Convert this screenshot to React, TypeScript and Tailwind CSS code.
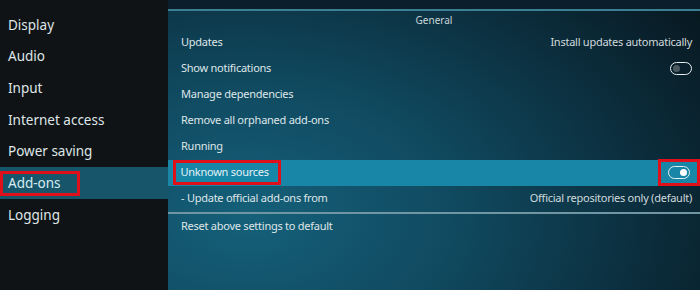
import React from 'react';

const sections = ['Display', 'Audio', 'Input', 'Internet access', 'Power saving', 'Add-ons', 'Logging'];

type Row = {
  label: string;
  value?: string;
  toggle?: 'on' | 'off';
  selected?: boolean;
};

const rows: Row[] = [
  { label: 'Updates', value: 'Install updates automatically' },
  { label: 'Show notifications', toggle: 'off' },
  { label: 'Manage dependencies' },
  { label: 'Remove all orphaned add-ons' },
  { label: 'Running' },
  { label: 'Unknown sources', toggle: 'on', selected: true },
  { label: '- Update official add-ons from', value: 'Official repositories only (default)' },
];

const Toggle: React.FC<{ on: boolean }> = ({ on }) => (
  <div
    className={`w-[22px] h-[13px] rounded-full border-[1.5px] border-[#e8eef0] flex items-center px-[2px] ${
      on ? 'justify-end' : 'justify-start'
    }`}
  >
    <div className={`w-[7px] h-[7px] rounded-full ${on ? 'bg-white' : 'bg-[#4a5a60]'}`} />
  </div>
);

export default function App() {
  return (
    <div
      className="w-[700px] h-[290px] flex overflow-hidden text-[#dfe6e8]"
      style={{ fontFamily: '"Noto Sans", "Open Sans", sans-serif' }}
    >
      {/* category list */}
      <div className="w-[168px] h-full bg-[#0f1316] pt-[9px] flex flex-col">
        {sections.map((s) => {
          const active = s === 'Add-ons';
          return (
            <div
              key={s}
              className={`h-[31.67px] flex items-center text-[13.5px] whitespace-nowrap ${active ? 'bg-[#17566a]' : ''}`}
            >
              {active ? (
                <span className="h-[25px] w-[80px] flex items-center pl-[5px] border-[3.5px] border-[#e0101a] text-[#d9ecf1]">
                  {s}
                </span>
              ) : (
                <span className="pl-[8px]">{s}</span>
              )}
            </div>
          );
        })}
      </div>

      {/* settings panel */}
      <div
        className="flex-1 h-full flex flex-col"
        style={{
          background:
            'radial-gradient(ellipse 110% 130% at 15% 75%, #15607a 0%, #104a60 35%, #0b2c3b 70%, #07141b 100%)',
        }}
      >
        <div className="h-[9px] bg-[#0a1f2b]" />
        <div className="h-[1.5px] bg-[#3b7f92]" />
        <div className="h-[19px] flex items-center justify-center text-[10px] text-[#c9d4d8]">General</div>
        {rows.map((r) => (
          <div
            key={r.label}
            className={`h-[26px] flex items-center justify-between pl-[13px] pr-[8px] text-[11px] tracking-[-0.25px] whitespace-nowrap ${
              r.selected ? 'bg-[#1886a6]' : ''
            }`}
          >
            {r.selected ? (
              <span className="-ml-[8px] h-[25px] w-[108px] flex items-center pl-[4.5px] border-[3.5px] border-[#e0101a] text-[#e4f2f6]">
                {r.label}
              </span>
            ) : (
              <span>{r.label}</span>
            )}
            {r.value && <span className="text-[#d0dade]">{r.value}</span>}
            {r.toggle &&
              (r.selected ? (
                <span className="-mr-[8px] w-[42px] h-[27px] border-[3.5px] border-[#e0101a] flex items-center justify-center">
                  <Toggle on />
                </span>
              ) : (
                <Toggle on={false} />
              ))}
          </div>
        ))}
        <div className="h-[1.5px] bg-[#6f96a2] mt-[0.5px]" />
        <div className="h-[26px] flex items-center pl-[13px] text-[11px] tracking-[-0.25px]">
          Reset above settings to default
        </div>
      </div>
    </div>
  );
}
